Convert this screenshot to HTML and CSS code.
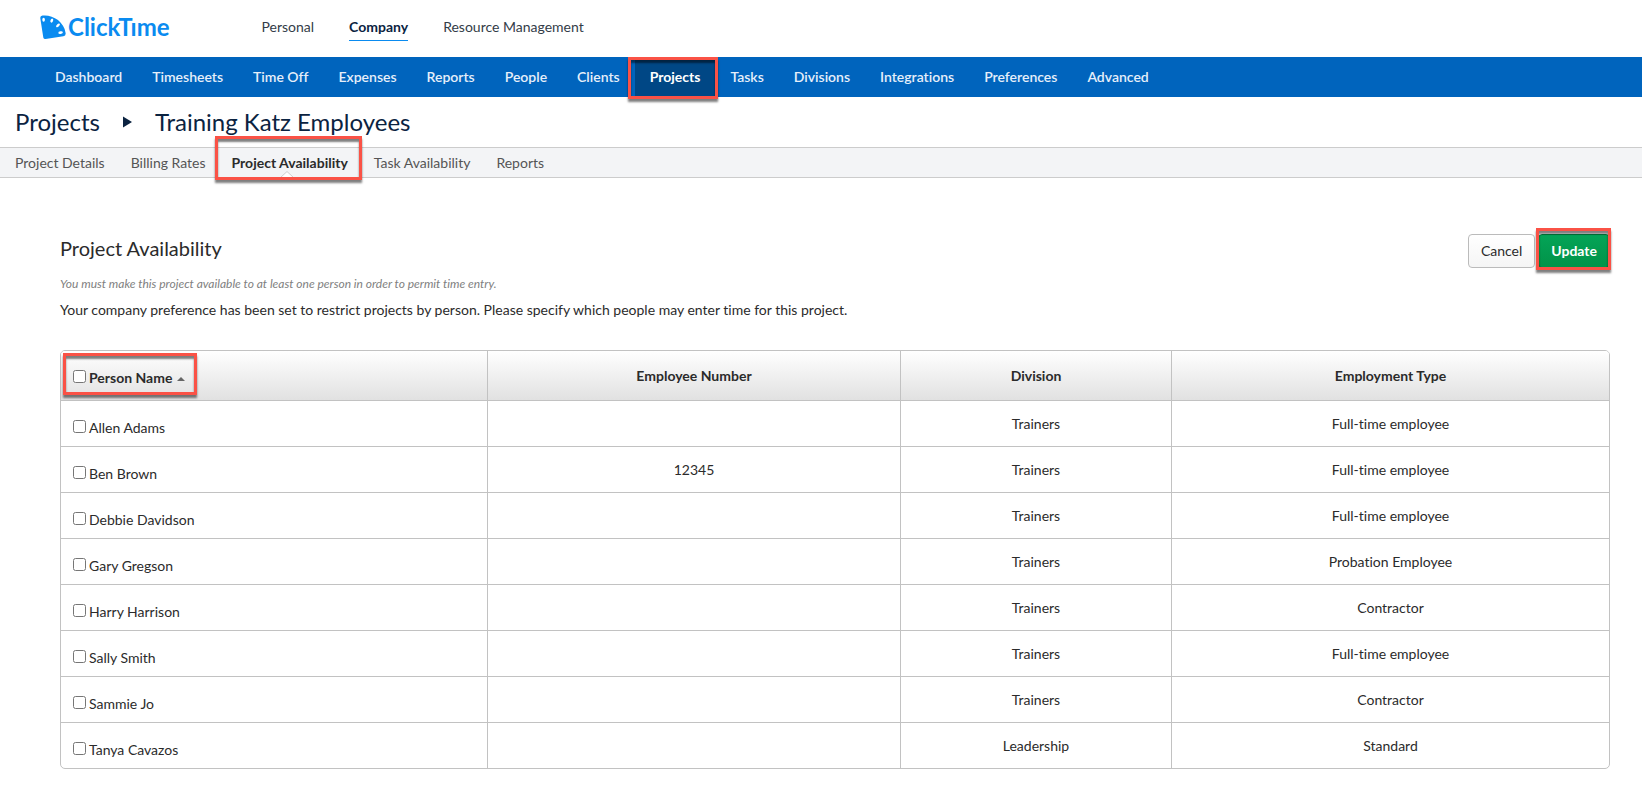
FILE: index.html
```html
<!DOCTYPE html>
<html lang="en">
<head>
    <meta charset="UTF-8">
    <meta name="viewport" content="width=device-width, initial-scale=1.0">
    <title>ClickTime</title>
    <link rel="stylesheet" href="styles.css">
</head>
<body>
    <header class="top-bar">
        <a href="#" class="logo" aria-label="ClickTime">
            <svg class="logo-icon" viewBox="0 0 26 24" aria-hidden="true">
                <path d="M2.5 0.6 C12 -0.6 24 6 25.6 18 Q26 20.8 23.4 21.3 L5.5 24 Q3.6 24.2 3.3 22.4 L0.3 3.2 Q0 1 2.5 0.6Z" fill="#0a8bf0"/>
                <g fill="#fff">
                    <ellipse cx="3.6" cy="4.8" rx="1.3" ry="2"/>
                    <ellipse cx="11.8" cy="5.6" rx="1.3" ry="2.1" transform="rotate(22 11.8 5.6)"/>
                    <ellipse cx="18" cy="10.4" rx="1.3" ry="2.3" transform="rotate(48 18 10.4)"/>
                    <ellipse cx="20.6" cy="17.6" rx="2.3" ry="1.3" transform="rotate(-8 20.6 17.6)"/>
                </g>
            </svg>
            <span class="logo-text">ClickTıme</span>
        </a>
        <nav class="top-links">
            <a href="#">Personal</a>
            <a href="#" class="active">Company</a>
            <a href="#">Resource Management</a>
        </nav>
    </header>

    <nav class="main-nav">
        <a href="#">Dashboard</a>
        <a href="#">Timesheets</a>
        <a href="#">Time Off</a>
        <a href="#">Expenses</a>
        <a href="#">Reports</a>
        <a href="#">People</a>
        <a href="#">Clients</a>
        <a href="#" class="active">Projects<span class="mark mark-nav"></span></a>
        <a href="#">Tasks</a>
        <a href="#">Divisions</a>
        <a href="#">Integrations</a>
        <a href="#">Preferences</a>
        <a href="#">Advanced</a>
    </nav>

    <h1 class="page-title">
        <a href="#">Projects</a>
        <svg class="title-arrow" viewBox="0 0 9 12" aria-hidden="true"><path d="M0 0.5 L9 6 L0 11.5Z" fill="#0b2341"/></svg>
        <span>Training Katz Employees</span>
    </h1>

    <nav class="sub-nav">
        <a href="#">Project Details</a>
        <a href="#">Billing Rates</a>
        <a href="#" class="active">Project Availability<svg class="notch" viewBox="0 0 14 7" aria-hidden="true"><path d="M0 7 L7 0 L14 7Z" fill="#fff"/><path d="M0 7 L7 0.5 L14 7" fill="none" stroke="#ccc"/></svg><span class="mark mark-tab"></span></a>
        <a href="#">Task Availability</a>
        <a href="#">Reports</a>
    </nav>

    <main class="content">
        <div class="content-head">
            <h2>Project Availability</h2>
            <div class="buttons">
                <button type="button" class="button">Cancel</button>
                <button type="button" class="button button-green">Update<span class="mark mark-button"></span></button>
            </div>
        </div>
        <p class="note">You must make this project available to at least one person in order to permit time entry.</p>
        <p class="intro">Your company preference has been set to restrict projects by person. Please specify which people may enter time for this project.</p>

        <table class="people">
            <colgroup>
                <col class="col-name">
                <col class="col-number">
                <col class="col-division">
                <col class="col-type">
            </colgroup>
            <thead>
                <tr>
                    <th class="name">
                        <span class="mark mark-name"></span>
                        <label><input type="checkbox">Person Name<svg class="sort" viewBox="0 0 8 4" aria-hidden="true"><path d="M0 4 L4 0 L8 4Z" fill="#666"/></svg></label>
                    </th>
                    <th>Employee Number</th>
                    <th>Division</th>
                    <th>Employment Type</th>
                </tr>
            </thead>
            <tbody>
                <tr>
                    <td class="name"><label><input type="checkbox">Allen Adams</label></td>
                    <td></td>
                    <td>Trainers</td>
                    <td>Full-time employee</td>
                </tr>
                <tr>
                    <td class="name"><label><input type="checkbox">Ben Brown</label></td>
                    <td>12345</td>
                    <td>Trainers</td>
                    <td>Full-time employee</td>
                </tr>
                <tr>
                    <td class="name"><label><input type="checkbox">Debbie Davidson</label></td>
                    <td></td>
                    <td>Trainers</td>
                    <td>Full-time employee</td>
                </tr>
                <tr>
                    <td class="name"><label><input type="checkbox">Gary Gregson</label></td>
                    <td></td>
                    <td>Trainers</td>
                    <td>Probation Employee</td>
                </tr>
                <tr>
                    <td class="name"><label><input type="checkbox">Harry Harrison</label></td>
                    <td></td>
                    <td>Trainers</td>
                    <td>Contractor</td>
                </tr>
                <tr>
                    <td class="name"><label><input type="checkbox">Sally Smith</label></td>
                    <td></td>
                    <td>Trainers</td>
                    <td>Full-time employee</td>
                </tr>
                <tr>
                    <td class="name"><label><input type="checkbox">Sammie Jo</label></td>
                    <td></td>
                    <td>Trainers</td>
                    <td>Contractor</td>
                </tr>
                <tr>
                    <td class="name"><label><input type="checkbox">Tanya Cavazos</label></td>
                    <td></td>
                    <td>Leadership</td>
                    <td>Standard</td>
                </tr>
            </tbody>
        </table>
    </main>
</body>
</html>
```

FILE: styles.css
```css
* {
    box-sizing: border-box;
}
body {
    margin: 0;
    background-color: white;
    color: #2b2b2b;
    font-family: Lato, sans-serif;
    font-size: 14px;
    font-variant-ligatures: none;
    line-height: 20px;
}
a {
    color: inherit;
    text-decoration: none;
}

/* header */
.top-bar {
    display: flex;
    align-items: center;
    height: 57px;
    padding: 0 40px 4px;
    gap: 92px;
}
.logo {
    display: flex;
    align-items: center;
    gap: 2px;
    color: #0a8bf0;
}
.logo-icon {
    width: 26px;
    height: 24px;
}
.logo-text {
    font-size: 24px;
    font-weight: bold;
    line-height: 24px;
}
.top-links {
    display: flex;
    gap: 35px;
    color: #333c48;
}
.top-links a {
    padding: 4px 0 3px;
    border-bottom: 1px solid transparent;
}
.top-links .active {
    color: #0b2341;
    font-weight: bold;
    border-bottom-color: #0a8bf0;
}

/* main menu */
.main-nav {
    display: flex;
    padding: 0 40px;
    background-color: #0064bd;
    color: #e6effa;
    font-weight: 600;
}
.main-nav a {
    position: relative;
    padding: 10px 15px;
}
.main-nav .active {
    background-color: #004785;
    color: white;
    font-weight: bold;
}

/* page title */
.page-title {
    display: flex;
    align-items: center;
    gap: 23px;
    height: 50px;
    margin: 0;
    padding: 0 15px;
    color: #0b2341;
    font-size: 24px;
    font-weight: normal;
}
.title-arrow {
    width: 9px;
    height: 12px;
}

/* project tabs */
.sub-nav {
    display: flex;
    gap: 26px;
    padding: 5px 15px 4px;
    background-color: #f3f4f6;
    border-top: 1px solid #ccc;
    border-bottom: 1px solid #ccc;
    color: #555;
}
.sub-nav a {
    position: relative;
}
.sub-nav .active {
    color: #2b2b2b;
    font-weight: bold;
}
.notch {
    position: absolute;
    left: 48px;
    bottom: -5px;
    width: 14px;
    height: 7px;
}

/* content */
.content {
    padding: 56px 32px 22px 60px;
}
.content-head {
    display: flex;
    justify-content: space-between;
    align-items: flex-start;
}
.content-head h2 {
    margin: 0;
    font-size: 20px;
    font-weight: normal;
    line-height: 28px;
}
.buttons {
    display: flex;
    gap: 3px;
}
.button {
    position: relative;
    height: 34px;
    padding: 0 12px;
    background: linear-gradient(white, #f5f5f5);
    border: 1px solid #bbb;
    border-radius: 4px;
    color: #2b2b2b;
    font: inherit;
    cursor: pointer;
}
.button-green {
    background: linear-gradient(#04a457, #029349);
    border-color: #04783c;
    color: white;
    font-weight: bold;
}
.note {
    margin: 6px 0;
    color: #808080;
    font-size: 12px;
    font-style: italic;
}
.intro {
    margin: 0 0 30px;
}

/* people table */
.people {
    width: 100%;
    table-layout: fixed;
    border: 1px solid #c2c2c2;
    border-radius: 5px;
    border-spacing: 0;
    text-align: center;
}
.col-name {
    width: 427px;
}
.col-number {
    width: 413px;
}
.col-division {
    width: 271px;
}
.people th {
    position: relative;
    height: 49px;
    padding: 0 12px;
    background: linear-gradient(white, #e1e1e1);
    border-right: 1px solid #c2c2c2;
}
.people td {
    height: 46px;
    padding: 0 12px;
    border-top: 1px solid #c2c2c2;
    border-right: 1px solid #c2c2c2;
}
.people th:last-child,
.people td:last-child {
    border-right: none;
}
.people th:first-child {
    border-top-left-radius: 4px;
}
.people th:last-child {
    border-top-right-radius: 4px;
}
.people .name {
    padding-top: 4px;
    text-align: left;
}
.people td.name {
    padding-top: 8px;
}
.people label {
    display: flex;
    align-items: center;
}
.people input {
    width: 13px;
    height: 13px;
    margin: 0 3px 2px 0;
}
.sort {
    width: 8px;
    height: 4px;
    margin: 2px 0 0 5px;
}

/* red highlight boxes */
.mark {
    position: absolute;
    z-index: 1;
    border: 3px solid #fa5246;
    box-shadow: 0 3px 2px rgba(0, 0, 0, 0.5), inset 0 3px 2px rgba(0, 0, 0, 0.5);
    pointer-events: none;
}
.mark-nav {
    inset: 0 -3px -2px -7px;
}
.mark-tab {
    inset: -17px -14px -7px -17px;
}
.mark-button {
    inset: -7px -2px -3px -3px;
}
.mark-name {
    top: 2px;
    left: 2px;
    width: 134px;
    height: 42px;
}
```
